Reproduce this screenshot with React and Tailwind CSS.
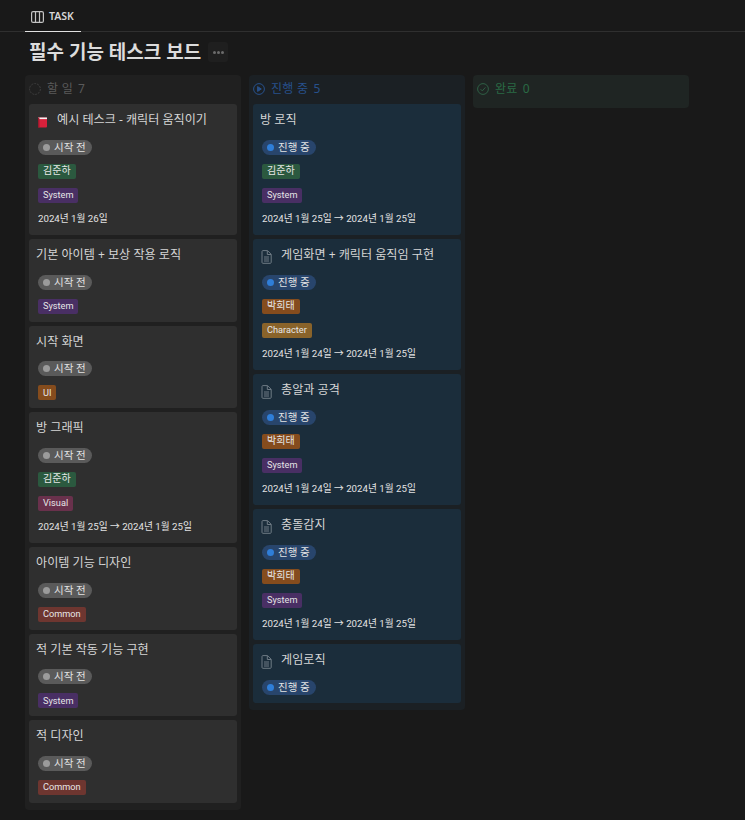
import React from 'react';

const fontStack = "font-['Noto_Sans','Noto_Sans_CJK_KR',sans-serif]";

const tagColors = {
  green: 'bg-[#2b593f]',
  purple: 'bg-[#492f64]',
  orange: 'bg-[#854c1d]',
  yellow: 'bg-[#89632a]',
  pink: 'bg-[#69314c]',
  red: 'bg-[#6e3630]',
};

const todoCards = [
  { title: '예시 테스크 - 캐릭터 움직이기', icon: 'book', tags: [['김준하', 'green'], ['System', 'purple']], date: '2024년 1월 26일' },
  { title: '기본 아이템 + 보상 작용 로직', tags: [['System', 'purple']] },
  { title: '시작 화면', tags: [['UI', 'orange']] },
  { title: '방 그래픽', tags: [['김준하', 'green'], ['Visual', 'pink']], date: '2024년 1월 25일 → 2024년 1월 25일' },
  { title: '아이템 기능 디자인', tags: [['Common', 'red']] },
  { title: '적 기본 작동 기능 구현', tags: [['System', 'purple']] },
  { title: '적 디자인', tags: [['Common', 'red']] },
];

const doingCards = [
  { title: '방 로직', tags: [['김준하', 'green'], ['System', 'purple']], date: '2024년 1월 25일 → 2024년 1월 25일' },
  { title: '게임화면 + 캐릭터 움직임 구현', icon: 'file', tags: [['박희태', 'orange'], ['Character', 'yellow']], date: '2024년 1월 24일 → 2024년 1월 25일' },
  { title: '총알과 공격', icon: 'file', tags: [['박희태', 'orange'], ['System', 'purple']], date: '2024년 1월 24일 → 2024년 1월 25일' },
  { title: '충돌감지', icon: 'file', tags: [['박희태', 'orange'], ['System', 'purple']], date: '2024년 1월 24일 → 2024년 1월 25일' },
  { title: '게임로직', icon: 'file', tags: [] },
];

function BookIcon() {
  return (
    <svg width="11" height="11" viewBox="0 0 11 11" className="shrink-0">
      <rect x="1" y="0.5" width="9" height="10" rx="1" fill="#d8213b" />
      <rect x="1" y="0.5" width="9" height="1.6" fill="#f3f3f3" />
      <rect x="1" y="0.5" width="1.4" height="10" fill="#9c1a2d" />
    </svg>
  );
}

function FileIcon() {
  return (
    <svg width="11" height="14" viewBox="0 0 11 14" fill="none" stroke="#6f7b85" strokeWidth="1" className="shrink-0">
      <path d="M1 1.5C1 1 1.3 .6 1.8 .6H6.5L10.2 4.3V12.4C10.2 12.9 9.9 13.3 9.4 13.3H1.8C1.3 13.3 1 12.9 1 12.4Z" />
      <path d="M6.3 .8V4.5H10" />
      <path d="M3 7H8M3 9H8M3 11H8" />
    </svg>
  );
}

function Tag({ label, color }) {
  // latin labels run wider than the korean ones at the same size
  const size = /^[A-Za-z]+$/.test(label) ? 'text-[9.2px]' : 'text-[10px]';
  return (
    <div className={`${tagColors[color]} ${size} font-['Roboto','Noto_Sans_CJK_KR',sans-serif] h-[15px] w-fit rounded-[2px] px-[5px] flex items-center leading-none text-[#e6e6e6]`}>
      {label}
    </div>
  );
}

function StatusPill({ label, pill, dot }) {
  return (
    <div className={`${pill} h-[15px] w-[54px] rounded-full pl-[5px] flex items-center gap-[4px] text-[10.5px] leading-none text-[#e3e3e3]`}>
      <span className={`${dot} w-[7px] h-[7px] rounded-full shrink-0`} />
      <span>{label}</span>
    </div>
  );
}

function Card({ card, bg, status }) {
  return (
    <div className={`${bg} rounded-[3px] pb-2`}>
      <div className="h-[35.5px] pt-[8px] pl-[7px] flex items-start">
        {card.icon && (
          <div className={`w-[21px] pl-[1px] flex shrink-0 ${card.icon === 'book' ? 'pt-[5px]' : 'pt-[3px]'}`}>
            {card.icon === 'book' ? <BookIcon /> : <FileIcon />}
          </div>
        )}
        <span className="text-[12.1px] leading-4 text-[#d6d6d6] whitespace-nowrap">{card.title}</span>
      </div>
      <div className="pl-[9px] flex flex-col gap-[9px]">
        {status}
        {card.tags.map(([label, color]) => (
          <Tag key={label} label={label} color={color} />
        ))}
      </div>
      {card.date && (
        <div className="font-['Roboto','Noto_Sans_CJK_KR',sans-serif] pl-[9px] h-[24.5px] pt-[8px] text-[9.7px] leading-4 text-[#e3e3e3] whitespace-nowrap">{card.date}</div>
      )}
    </div>
  );
}

function Column({ bg, icon, label, labelColor, count, cards, cardBg, status }) {
  return (
    <div className={`${bg} w-[216px] shrink-0 rounded-[4px] px-1 ${cards.length > 0 ? 'pb-[7px]' : 'pb-[4px]'}`}>
      <div className="h-[29px] pb-[2px] flex items-center gap-[6px]">
        {icon}
        <span className={`${labelColor} text-[12px] tracking-[0.3px] whitespace-nowrap`}>{label}</span>
        <span className={`${labelColor} text-[12px] -ml-[1px]`}>{count}</span>
      </div>
      {cards.length > 0 && (
        <div className="flex flex-col gap-1">
          {cards.map((card) => (
            <Card key={card.title} card={card} bg={cardBg} status={status} />
          ))}
        </div>
      )}
    </div>
  );
}

export default function App() {
  return (
    <div className={`${fontStack} w-[745px] h-[820px] overflow-hidden bg-[#191919] text-[#d6d6d6]`}>
      {/* tab bar */}
      <div className="h-8 border-b border-[#2f2f2f] pl-[25px]">
        <div className="h-8 w-14 border-b border-[#e0e0e0] pt-[2px] flex items-center gap-[5px] pl-[6px]">
          <svg width="13" height="12" viewBox="0 0 13 12" fill="none" stroke="#c4c4c4" strokeWidth="1.2">
            <rect x="0.6" y="0.6" width="11.8" height="10.8" rx="1.5" />
            <path d="M4.5 .6V11.4M8.5 .6V11.4" />
          </svg>
          <span className="text-[10.5px] font-semibold text-[#d6d6d6]">TASK</span>
        </div>
      </div>

      {/* title */}
      <div className="h-[40px] mb-[3px] pl-[29px] flex items-center gap-[7px]">
        <h1 className="text-[19px] font-bold leading-none text-[#dcdcdc] whitespace-nowrap">필수 기능 테스크 보드</h1>
        <div className="w-5 h-5 rounded-[3px] bg-[#1f1f1f] flex items-center justify-center gap-[1px]">
          <span className="w-[3px] h-[3px] rounded-full bg-[#6b6b6b]" />
          <span className="w-[3px] h-[3px] rounded-full bg-[#6b6b6b]" />
          <span className="w-[3px] h-[3px] rounded-full bg-[#6b6b6b]" />
        </div>
      </div>

      {/* board */}
      <div className="pl-[25px] flex items-start gap-2">
        <Column
          bg="bg-[#202020]"
          label="할 일"
          labelColor="text-[#5a5a5a]"
          count="7"
          cards={todoCards}
          cardBg="bg-[#2f2f2f]"
          status={<StatusPill label="시작 전" pill="bg-[#5a5a5a]" dot="bg-[#9b9b9b]" />}
          icon={
            <svg width="12" height="12" viewBox="0 0 12 12" fill="none" stroke="#3f3f3f" strokeWidth="1" strokeDasharray="2 1" className="shrink-0">
              <circle cx="6" cy="6" r="5.4" />
            </svg>
          }
        />
        <Column
          bg="bg-[#1b2024]"
          label="진행 중"
          labelColor="text-[#27518c]"
          count="5"
          cards={doingCards}
          cardBg="bg-[#1b2d3b]"
          status={<StatusPill label="진행 중" pill="bg-[#28456c]" dot="bg-[#2f7ed8]" />}
          icon={
            <svg width="12" height="12" viewBox="0 0 12 12" fill="none" stroke="#27518c" strokeWidth="1" className="shrink-0">
              <circle cx="6" cy="6" r="5.4" />
              <path d="M4.6 3.6V8.4L8.3 6Z" fill="#27518c" />
            </svg>
          }
        />
        <Column
          bg="bg-[#1f2523]"
          label="완료"
          labelColor="text-[#2a6b45]"
          count="0"
          cards={[]}
          icon={
            <svg width="12" height="12" viewBox="0 0 12 12" fill="none" stroke="#2f5f45" strokeWidth="1" className="shrink-0">
              <circle cx="6" cy="6" r="5.4" />
              <path d="M3.6 6.2L5.3 7.9L8.4 4.4" />
            </svg>
          }
        />
      </div>
    </div>
  );
}
